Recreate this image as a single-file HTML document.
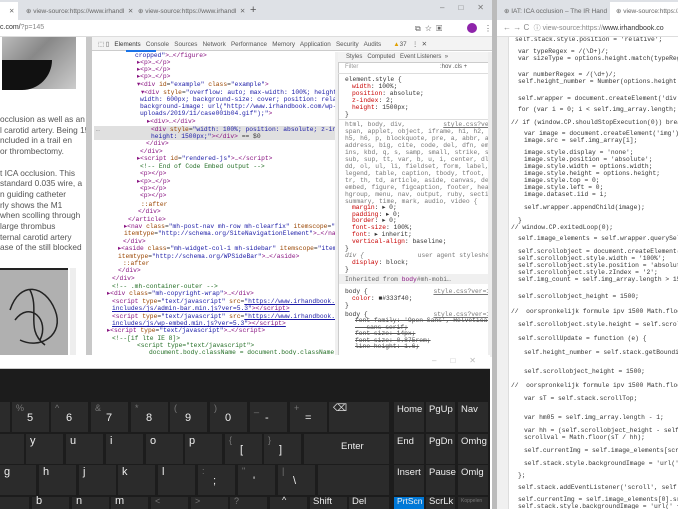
<!DOCTYPE html>
<html><head><meta charset="utf-8"><style>
*{margin:0;padding:0;box-sizing:border-box}
body{width:678px;height:509px;overflow:hidden;background:#fff;position:relative;font-family:"Liberation Sans",sans-serif}
.a{position:absolute;white-space:nowrap}
.m{font-family:"Liberation Mono",monospace;font-size:6.3px;color:#333}
.w{position:absolute;left:0;top:0;width:678px;height:509px}
.s{font-size:8.3px;color:#555}
.t{color:#881280}.n{color:#994500}.v{color:#1a1aa6}.c{color:#236e25}
.tab{font-size:6.5px;color:#666}
.k{position:absolute;background:#2b2b2b;color:#eee;font-size:11px}
.k b{position:absolute;font-weight:normal;left:15px;top:10px}
.k i{position:absolute;font-style:normal;left:4px;top:1px;color:#777;font-size:9px}
.k.r{font-size:9.5px}
.k.r b{left:3px;top:2px}
</style></head><body>
<div class="a" style="left:0;top:0;width:492px;height:20px;background:#dee1e6"></div>
<div class="a" style="left:0;top:2px;width:18px;height:18px;background:#fff"></div>
<div class="a tab" style="left:9px;top:7px">✕</div>
<div class="a tab" style="left:26px;top:7px">⊕ view-source:https://www.irhandl &nbsp;✕</div>
<div class="a tab" style="left:138px;top:7px">⊕ view-source:https://www.irhandl &nbsp;✕</div>
<div class="a" style="left:250px;top:4px;font-size:11px;color:#555">+</div>
<div class="a" style="left:440px;top:3px;font-size:8px;color:#777;letter-spacing:14px">–□✕</div>
<div class="a" style="left:0;top:20px;width:492px;height:17px;background:#fff;border-bottom:1px solid #ddd"></div>
<div class="a" style="left:0;top:24px;font-size:7px;color:#333">c.com/<span style="color:#888">?p=145</span></div>
<div class="a" style="left:415px;top:24px;font-size:8px;color:#666">⧉ &nbsp;☆ &nbsp;▣</div>
<div class="a" style="left:467px;top:23px;width:10px;height:10px;border-radius:5px;background:#8e24aa"></div>
<div class="a" style="left:484px;top:24px;font-size:8px;color:#555">⋮</div>
<div class="a" style="left:2px;top:37px;width:74px;height:52px;background:linear-gradient(135deg,#bbb,#888 40%,#ccc);"></div>
<div class="a" style="left:2px;top:60px;width:50px;height:30px;border-radius:0 0 30px 0;background:#111"></div>
<div class="a s" style="left:0;top:114px;line-height:10.7px">occlusion as well as an<br>l carotid artery. Being 15<br>ncluded in a trail en<br>or thrombectomy.<br><br>t ICA occlusion. This<br>standard 0.035 wire, a<br>n guiding catheter<br>rly shows the M1<br>when scolling through<br>large thrombus<br>ternal carotid artery<br>ase of the still blocked</div>
<div class="a" style="left:0;top:268px;width:68px;height:88px;background:#b0b0b0;border-top:2px solid #222"></div>
<svg class="a" style="left:0;top:270px" width="68" height="86"><path d="M10 40 C20 10 45 15 55 40 S40 80 20 70 M15 50 C30 30 50 50 40 70 M30 20 C40 40 25 60 45 75" stroke="#222" fill="none" stroke-width="1.5"/></svg>
<div class="a" style="left:70px;top:268px;width:6px;height:88px;background:#eee"></div>
<div class="a" style="left:86px;top:37px;width:6px;height:320px;background:#c8c8c8"></div>
<div class="a" style="left:92px;top:37px;width:400px;height:14px;background:#f3f3f3;border-bottom:1px solid #ccc"></div>
<div class="a" style="left:98px;top:41px;font-size:6.3px;color:#555">⬚ ▯ &nbsp; <span style="color:#333">Elements</span> &nbsp; Console &nbsp; Sources &nbsp; Network &nbsp; Performance &nbsp; Memory &nbsp; Application &nbsp; Security &nbsp; Audits &nbsp; &nbsp; &nbsp; <span style="color:#e0a000">▲</span>37 &nbsp; ⋮ &nbsp;✕</div>
<div class="a" style="left:126px;top:50px;width:30px;height:2px;background:#1a73e8"></div>
<div class="a" style="left:94px;top:126px;width:241px;height:14px;background:#e0e0e0"></div>
<div class="a" style="left:335px;top:52px;width:3px;height:305px;background:#f0f0f0"></div>
<div class="w m" style="clip-path:inset(52px 343px 154px 92px)">
<div class="a" style="left:135px;top:52px"><span class="v">cropped"</span><span class="t">&gt;…&lt;/figure&gt;</span></div>
<div class="a t" style="left:137px;top:59px">▸&lt;p&gt;…&lt;/p&gt;</div>
<div class="a t" style="left:137px;top:66px">▸&lt;p&gt;…&lt;/p&gt;</div>
<div class="a t" style="left:137px;top:73px">▸&lt;p&gt;…&lt;/p&gt;</div>
<div class="a" style="left:137px;top:81px"><span class="t">▾&lt;div </span><span class="n">id</span>=<span class="v">"example"</span> <span class="n">class</span>=<span class="v">"example"</span><span class="t">&gt;</span></div>
<div class="a" style="left:141px;top:89px"><span class="t">▾&lt;div </span><span class="n">style</span>=<span class="v">"overflow: auto; max-width: 100%; height: 600px;</span></div>
<div class="a v" style="left:140px;top:96px">width: 600px; background-size: cover; position: relative;</div>
<div class="a v" style="left:140px;top:103px">background-image: url("http://www.irhandbook.com/wp-content/</div>
<div class="a v" style="left:140px;top:110px">uploads/2019/11/case001b04.gif");"<span class="t">&gt;</span></div>
<div class="a t" style="left:147px;top:118px">▸&lt;div&gt;…&lt;/div&gt;</div>
<div class="a" style="left:96px;top:126px;color:#888">…</div>
<div class="a" style="left:151px;top:126px"><span class="t">&lt;div </span><span class="n">style</span>=<span class="v">"width: 100%; position: absolute; z-index: 2;</span></div>
<div class="a" style="left:151px;top:133px"><span class="v">height: 1500px;"</span><span class="t">&gt;&lt;/div&gt;</span> == $0</div>
<div class="a t" style="left:146px;top:140px">&lt;/div&gt;</div>
<div class="a t" style="left:140px;top:148px">&lt;/div&gt;</div>
<div class="a" style="left:137px;top:155px"><span class="t">▸&lt;script </span><span class="n">id</span>=<span class="v">"rendered-js"</span><span class="t">&gt;…&lt;/script&gt;</span></div>
<div class="a c" style="left:140px;top:163px">&lt;!-- End of Code Embed output --&gt;</div>
<div class="a t" style="left:140px;top:170px">&lt;p&gt;&lt;/p&gt;</div>
<div class="a t" style="left:137px;top:178px">▸&lt;p&gt;…&lt;/p&gt;</div>
<div class="a t" style="left:140px;top:185px">&lt;p&gt;&lt;/p&gt;</div>
<div class="a t" style="left:140px;top:192px">&lt;p&gt;&lt;/p&gt;</div>
<div class="a n" style="left:141px;top:201px">::after</div>
<div class="a t" style="left:138px;top:208px">&lt;/div&gt;</div>
<div class="a t" style="left:128px;top:216px">&lt;/article&gt;</div>
<div class="a" style="left:124px;top:223px"><span class="t">▸&lt;nav </span><span class="n">class</span>=<span class="v">"mh-post-nav mh-row mh-clearfix"</span> <span class="n">itemscope</span>=<span class="v">"itemscope"</span></div>
<div class="a" style="left:124px;top:230px"><span class="n">itemtype</span>=<span class="v">"http://schema.org/SiteNavigationElement"</span><span class="t">&gt;…&lt;/nav&gt;</span></div>
<div class="a t" style="left:123px;top:238px">&lt;/div&gt;</div>
<div class="a" style="left:118px;top:245px"><span class="t">▸&lt;aside </span><span class="n">class</span>=<span class="v">"mh-widget-col-1 mh-sidebar"</span> <span class="n">itemscope</span>=<span class="v">"itemscope"</span></div>
<div class="a" style="left:118px;top:253px"><span class="n">itemtype</span>=<span class="v">"http://schema.org/WPSideBar"</span><span class="t">&gt;…&lt;/aside&gt;</span></div>
<div class="a n" style="left:123px;top:260px">::after</div>
<div class="a t" style="left:118px;top:267px">&lt;/div&gt;</div>
<div class="a t" style="left:112px;top:275px">&lt;/div&gt;</div>
<div class="a c" style="left:112px;top:283px">&lt;!-- .mh-container-outer --&gt;</div>
<div class="a" style="left:107px;top:290px"><span class="t">▸&lt;div </span><span class="n">class</span>=<span class="v">"mh-copyright-wrap"</span><span class="t">&gt;…&lt;/div&gt;</span></div>
<div class="a" style="left:112px;top:298px"><span class="t">&lt;script </span><span class="n">type</span>=<span class="v">"text/javascript"</span> <span class="n">src</span>=<span class="v" style="text-decoration:underline">"https://www.irhandbook.com/wp-</span></div>
<div class="a v" style="left:112px;top:305px;text-decoration:underline">includes/js/admin-bar.min.js?ver=5.3"<span class="t">&gt;&lt;/script&gt;</span></div>
<div class="a" style="left:112px;top:313px"><span class="t">&lt;script </span><span class="n">type</span>=<span class="v">"text/javascript"</span> <span class="n">src</span>=<span class="v" style="text-decoration:underline">"https://www.irhandbook.com/wp-</span></div>
<div class="a v" style="left:112px;top:320px;text-decoration:underline">includes/js/wp-embed.min.js?ver=5.3"<span class="t">&gt;&lt;/script&gt;</span></div>
<div class="a" style="left:107px;top:327px"><span class="t">▸&lt;script </span><span class="n">type</span>=<span class="v">"text/javascript"</span><span class="t">&gt;…&lt;/script&gt;</span></div>
<div class="a c" style="left:112px;top:335px">&lt;!--[if lte IE 8]&gt;</div>
<div class="a c" style="left:137px;top:342px">&lt;script type="text/javascript"&gt;</div>
<div class="a c" style="left:149px;top:349px">document.body.className = document.body.className.replace(</div>
</div>
<div class="a" style="left:338px;top:52px;width:150px;height:305px;border-left:1px solid #ccc"></div>
<div class="a" style="left:338px;top:52px;width:150px;height:11px;background:#f3f3f3;border-bottom:1px solid #ccc"></div>
<div class="a" style="left:346px;top:54px;font-size:6px;color:#555">Styles &nbsp; Computed &nbsp; Event Listeners &nbsp;»</div>
<div class="a" style="left:345px;top:64px;font-size:6px;color:#999">Filter <span style="margin-left:80px;color:#555">:hov .cls +</span></div>
<div class="a" style="left:338px;top:73px;width:150px;height:1px;background:#ddd"></div>
<div class="w m" style="clip-path:inset(74px 190px 154px 339px)">
<div class="a" style="left:345px;top:76px">element.style {</div>
<div class="a" style="left:352px;top:83px"><span style="color:#c80000">width</span>: 100%;</div>
<div class="a" style="left:352px;top:90px"><span style="color:#c80000">position</span>: absolute;</div>
<div class="a" style="left:352px;top:97px"><span style="color:#c80000">z-index</span>: 2;</div>
<div class="a" style="left:352px;top:104px"><span style="color:#c80000">height</span>: 1500px;</div>
<div class="a" style="left:345px;top:111px">}</div>
<div class="a" style="left:338px;top:119px;width:150px;height:1px;background:#ddd"></div>
<div class="a" style="left:345px;top:121px;color:#777;line-height:7px">html, body, div, &nbsp; &nbsp; &nbsp; &nbsp; &nbsp;<u>style.css?ver=1.8.6:18</u><br>span, applet, object, iframe, h1, h2, h3, h4,<br>h5, h6, p, blockquote, pre, a, abbr, acronym,<br>address, big, cite, code, del, dfn, em, img,<br>ins, kbd, q, s, samp, small, strike, strong,<br>sub, sup, tt, var, b, u, i, center, dl, dt,<br>dd, ol, ul, li, fieldset, form, label,<br>legend, table, caption, tbody, tfoot, thead,<br>tr, th, td, article, aside, canvas, details,<br>embed, figure, figcaption, footer, header,<br>hgroup, menu, nav, output, ruby, section,<br>summary, time, mark, audio, video {</div>
<div class="a" style="left:352px;top:205px;line-height:6.7px"><span style="color:#c80000">margin</span>: ▸ 0;<br><span style="color:#c80000">padding</span>: ▸ 0;<br><span style="color:#c80000">border</span>: ▸ 0;<br><span style="color:#c80000">font-size</span>: 100%;<br><span style="color:#c80000">font</span>: ▸ inherit;<br><span style="color:#c80000">vertical-align</span>: baseline;</div>
<div class="a" style="left:345px;top:245px">}</div>
<div class="a" style="left:345px;top:252px;color:#777"><i>div {</i> <span style="margin-left:50px">user agent stylesheet</span></div>
<div class="a" style="left:352px;top:259px"><span style="color:#c80000">display</span>: block;</div>
<div class="a" style="left:345px;top:266px">}</div>
<div class="a" style="left:338px;top:274px;width:150px;height:10px;background:#f0f0f0"></div>
<div class="a" style="left:345px;top:276px;color:#666">Inherited from <span class="t">body</span>#mh-mobi…</div>
<div class="a" style="left:345px;top:288px">body { <span style="margin-left:62px;color:#777"><u>style.css?ver=1.2.4:18</u></span></div>
<div class="a" style="left:352px;top:295px"><span style="color:#c80000">color</span>: ■#333f40;</div>
<div class="a" style="left:345px;top:302px">}</div>
<div class="a" style="left:345px;top:311px">body { <span style="margin-left:62px;color:#777"><u>style.css?ver=1.8.6:28</u></span></div>
<div class="a" style="left:355px;top:318px;text-decoration:line-through;line-height:6.6px;color:#555">font-family: 'Open Sans', Helvetica, Arial,<br>&nbsp; &nbsp;sans-serif;<br>font-size: 14px;<br>font-size: 0.875rem;<br>line-height: 1.6;</div>
</div>
<div class="a" style="left:488px;top:52px;width:4px;height:305px;background:#eee"></div>
<div class="a" style="left:492px;top:0;width:5px;height:509px;background:#bbb"></div>
<div class="a" style="left:497px;top:0;width:181px;height:20px;background:#dee1e6"></div>
<div class="a tab" style="left:504px;top:7px">⊕ IAT: ICA occlusion – The IR Hand &nbsp;✕</div>
<div class="a" style="left:610px;top:2px;width:68px;height:18px;background:#fff"></div>
<div class="a tab" style="left:616px;top:7px">⊕ view-source:https://</div>
<div class="a" style="left:497px;top:20px;width:181px;height:17px;background:#fff;border-bottom:1px solid #ddd"></div>
<div class="a" style="left:503px;top:23px;font-size:8px;color:#888">← → C &nbsp;<span style="font-size:7px">ⓘ view-source:https://<span style="color:#333">www.irhandbook.co</span></span></div>
<div class="a" style="left:497px;top:37px;width:12px;height:472px;background:#f0f0f0;border-right:1px solid #ddd"></div>
<div class="w m" style="clip-path:inset(37px 0 0 510px)">
<div class="a" style="left:515px;top:36px">self.stack.style.position = 'relative';</div>
<div class="a" style="left:518px;top:48px">var typeRegex = /(\D+)/;</div>
<div class="a" style="left:518px;top:55px">var sizeType = options.height.match(typeRegex)[0</div>
<div class="a" style="left:518px;top:71px">var numberRegex = /(\d+)/;</div>
<div class="a" style="left:518px;top:78px">self.height_number = Number(options.height.match</div>
<div class="a" style="left:518px;top:95px">self.wrapper = document.createElement('div');</div>
<div class="a" style="left:518px;top:106px">for (var i = 0; i &lt; self.img_array.length; i++)</div>
<div class="a" style="left:511px;top:119px">// if (window.CP.shouldStopExecution(0)) break;</div>
<div class="a" style="left:524px;top:130px">var image = document.createElement('img');</div>
<div class="a" style="left:524px;top:137px">image.src = self.img_array[i];</div>
<div class="a" style="left:524px;top:149px">image.style.display = 'none';</div>
<div class="a" style="left:524px;top:156px">image.style.position = 'absolute';</div>
<div class="a" style="left:524px;top:163px">image.style.width = options.width;</div>
<div class="a" style="left:524px;top:170px">image.style.height = options.height;</div>
<div class="a" style="left:524px;top:177px">image.style.top = 0;</div>
<div class="a" style="left:524px;top:184px">image.style.left = 0;</div>
<div class="a" style="left:524px;top:191px">image.dataset.iid = i;</div>
<div class="a" style="left:524px;top:204px">self.wrapper.appendChild(image);</div>
<div class="a" style="left:518px;top:217px">}</div>
<div class="a" style="left:511px;top:224px">// window.CP.exitedLoop(0);</div>
<div class="a" style="left:518px;top:235px">self.image_elements = self.wrapper.querySelector</div>
<div class="a" style="left:518px;top:248px">self.scrollobject = document.createElement('div</div>
<div class="a" style="left:518px;top:255px">self.scrollobject.style.width = '100%';</div>
<div class="a" style="left:518px;top:262px">self.scrollobject.style.position = 'absolute';</div>
<div class="a" style="left:518px;top:269px">self.scrollobject.style.zIndex = '2';</div>
<div class="a" style="left:518px;top:276px">self.img_count = self.img_array.length &gt; 15 ? se</div>
<div class="a" style="left:518px;top:293px">self.scrollobject_height = 1500;</div>
<div class="a" style="left:511px;top:308px">// &nbsp;oorspronkelijk formule ipv 1500 Math.floor(0.</div>
<div class="a" style="left:518px;top:321px">self.scrollobject.style.height = self.scrollobje</div>
<div class="a" style="left:518px;top:335px">self.scrollUpdate = function (e) {</div>
<div class="a" style="left:524px;top:349px">self.height_number = self.stack.getBoundingCli</div>
<div class="a" style="left:524px;top:368px">self.scrollobject_height = 1500;</div>
<div class="a" style="left:511px;top:382px">// &nbsp;oorspronkelijk formule ipv 1500 Math.floor(0.</div>
<div class="a" style="left:524px;top:395px">var sT = self.stack.scrollTop;</div>
<div class="a" style="left:524px;top:414px">var hm05 = self.img_array.length - 1;</div>
<div class="a" style="left:524px;top:427px">var hh = (self.scrollobject_height - self.heig</div>
<div class="a" style="left:524px;top:434px">scrollval = Math.floor(sT / hh);</div>
<div class="a" style="left:524px;top:447px">self.currentImg = self.image_elements[scrollva</div>
<div class="a" style="left:524px;top:460px">self.stack.style.backgroundImage = 'url(' + se</div>
<div class="a" style="left:518px;top:472px">};</div>
<div class="a" style="left:518px;top:484px">self.stack.addEventListener('scroll', self.scrol</div>
<div class="a" style="left:518px;top:496px">self.currentImg = self.image_elements[0].src;</div>
<div class="a" style="left:518px;top:503px">self.stack.style.backgroundImage = 'url(' + self</div>
</div>
<div class="a" style="left:0;top:355px;width:490px;height:14px;background:#fff;border-bottom:1px solid #ccc"></div>
<div class="a" style="left:432px;top:356px;font-size:8px;color:#bbb;letter-spacing:14px">–□✕</div>
<div class="a" style="left:0;top:369px;width:490px;height:140px;background:#1c1c1c"></div>
<div class="k" style="left:0;top:402px;width:10px;height:30px"></div>
<div class="k" style="left:12px;top:402px;width:37px;height:30px"><i>%</i><b>5</b></div>
<div class="k" style="left:51px;top:402px;width:37px;height:30px"><i>^</i><b>6</b></div>
<div class="k" style="left:91px;top:402px;width:37px;height:30px"><i>&amp;</i><b>7</b></div>
<div class="k" style="left:131px;top:402px;width:37px;height:30px"><i>*</i><b>8</b></div>
<div class="k" style="left:170px;top:402px;width:37px;height:30px"><i>(</i><b>9</b></div>
<div class="k" style="left:210px;top:402px;width:37px;height:30px"><i>)</i><b>0</b></div>
<div class="k" style="left:250px;top:402px;width:37px;height:30px"><i>_</i><b>-</b></div>
<div class="k" style="left:290px;top:402px;width:37px;height:30px"><i>+</i><b>=</b></div>
<div class="k" style="left:329px;top:402px;width:60px;height:30px"><i style="color:#ddd;font-size:10px">⌫</i></div>
<div class="k" style="left:0;top:434px;width:24px;height:30px"></div>
<div class="k" style="left:26px;top:434px;width:37px;height:30px"><i style="color:#eee;font-size:11px">y</i></div>
<div class="k" style="left:66px;top:434px;width:37px;height:30px"><i style="color:#eee;font-size:11px">u</i></div>
<div class="k" style="left:106px;top:434px;width:37px;height:30px"><i style="color:#eee;font-size:11px">i</i></div>
<div class="k" style="left:146px;top:434px;width:37px;height:30px"><i style="color:#eee;font-size:11px">o</i></div>
<div class="k" style="left:185px;top:434px;width:37px;height:30px"><i style="color:#eee;font-size:11px">p</i></div>
<div class="k" style="left:225px;top:434px;width:37px;height:30px"><i>{</i><b>[</b></div>
<div class="k" style="left:264px;top:434px;width:37px;height:30px"><i>}</i><b>]</b></div>
<div class="k" style="left:304px;top:434px;width:85px;height:30px"><b style="left:37px;top:7px;font-size:9.5px">Enter</b></div>
<div class="k" style="left:0;top:465px;width:36px;height:30px"><i style="color:#eee;font-size:11px">g</i></div>
<div class="k" style="left:39px;top:465px;width:37px;height:30px"><i style="color:#eee;font-size:11px">h</i></div>
<div class="k" style="left:79px;top:465px;width:37px;height:30px"><i style="color:#eee;font-size:11px">j</i></div>
<div class="k" style="left:118px;top:465px;width:37px;height:30px"><i style="color:#eee;font-size:11px">k</i></div>
<div class="k" style="left:158px;top:465px;width:37px;height:30px"><i style="color:#eee;font-size:11px">l</i></div>
<div class="k" style="left:198px;top:465px;width:37px;height:30px"><i>:</i><b>;</b></div>
<div class="k" style="left:238px;top:465px;width:37px;height:30px"><i>"</i><b>'</b></div>
<div class="k" style="left:278px;top:465px;width:37px;height:30px"><i>|</i><b>\</b></div>
<div class="k" style="left:318px;top:465px;width:71px;height:30px"></div>
<div class="k" style="left:0;top:497px;width:29px;height:12px"></div>
<div class="k" style="left:32px;top:497px;width:37px;height:12px"><i style="color:#eee;font-size:11px;top:-2px">b</i></div>
<div class="k" style="left:72px;top:497px;width:37px;height:12px"><i style="color:#eee;font-size:11px;top:-2px">n</i></div>
<div class="k" style="left:111px;top:497px;width:37px;height:12px"><i style="color:#eee;font-size:11px;top:-2px">m</i></div>
<div class="k" style="left:151px;top:497px;width:37px;height:12px"><i style="top:-1px">&lt;</i></div>
<div class="k" style="left:191px;top:497px;width:37px;height:12px"><i style="top:-1px">&gt;</i></div>
<div class="k" style="left:230px;top:497px;width:37px;height:12px"><i style="top:-1px">?</i></div>
<div class="k" style="left:270px;top:497px;width:37px;height:12px"><i style="color:#eee;top:-2px;left:12px">^</i></div>
<div class="k r" style="left:310px;top:497px;width:37px;height:12px"><b style="top:-1px">Shift</b></div>
<div class="k r" style="left:349px;top:497px;width:40px;height:12px"><b style="top:-1px">Del</b></div>
<div class="k r" style="left:394px;top:402px;width:30px;height:30px"><b>Home</b></div>
<div class="k r" style="left:426px;top:402px;width:29px;height:30px"><b>PgUp</b></div>
<div class="k r" style="left:458px;top:402px;width:30px;height:30px"><b>Nav</b></div>
<div class="k r" style="left:394px;top:434px;width:30px;height:30px"><b>End</b></div>
<div class="k r" style="left:426px;top:434px;width:29px;height:30px"><b>PgDn</b></div>
<div class="k r" style="left:458px;top:434px;width:30px;height:30px"><b>Omhg</b></div>
<div class="k r" style="left:394px;top:465px;width:30px;height:30px"><b>Insert</b></div>
<div class="k r" style="left:426px;top:465px;width:29px;height:30px"><b>Pause</b></div>
<div class="k r" style="left:458px;top:465px;width:30px;height:30px"><b>Omlg</b></div>
<div class="k r" style="left:394px;top:497px;width:30px;height:12px;background:#0078d7"><b style="top:-1px;font-size:8.5px">PrtScn</b></div>
<div class="k r" style="left:426px;top:497px;width:29px;height:12px"><b style="top:-1px">ScrLk</b></div>
<div class="k r" style="left:458px;top:497px;width:30px;height:12px"><b style="top:1px;font-size:5px;color:#777">Koppelen</b></div>
</body></html>
